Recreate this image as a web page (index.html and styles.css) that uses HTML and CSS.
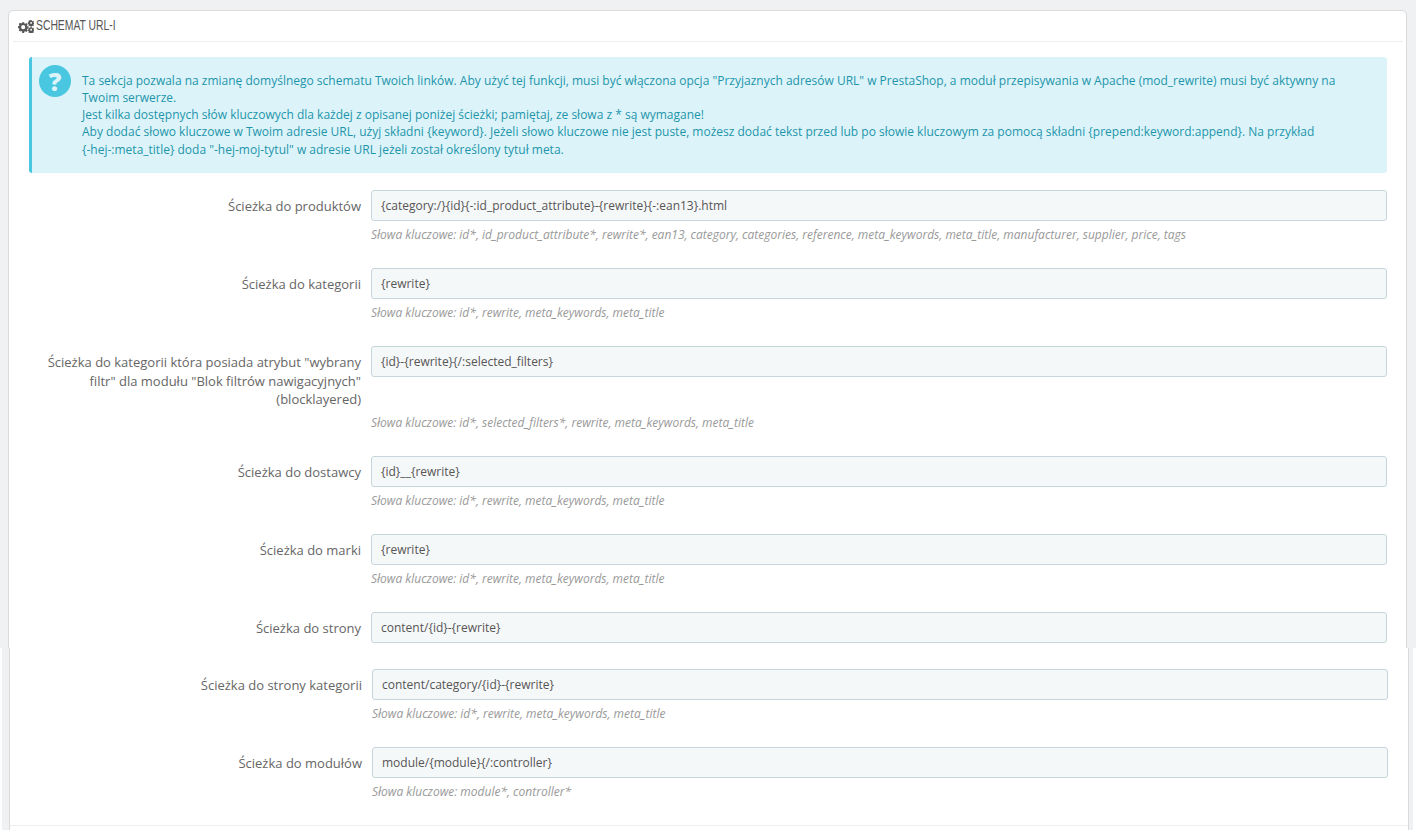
FILE: index.html
```html
<!DOCTYPE html>
<html>
	<head>
		<meta charset="UTF-8">
		<title>Schemat URL-i</title>
		<link rel="stylesheet" href="styles.css">
	</head>
	<body>
		<div class="upper">
			<div class="panel panel-top">
				<div class="heading">
					<svg class="cogs" viewBox="0 0 20 16" width="16" height="13">
						<g fill="#555">
							<path fill-rule="evenodd" d="M5.3 2.6h2.4l.3 1.6 1 .4 1.4-.9 1.7 1.7-.9 1.4.4 1 1.600.3v2.400l-1.600.3-.4 1 .9 1.400-1.700 1.700-1.400-.9-1 .4-.3 1.600H5.300L5 13.900l-1-.4-1.400.9L.9 12.700l.9-1.400-.4-1L-.2 10V7.600l1.600-.3.4-1-.9-1.400L2.600 3.200l1.400.9 1-.4zM6.500 6.200a2.600 2.600 0 1 0 0 5.200 2.600 2.600 0 0 0 0-5.200z"/>
							<path fill-rule="evenodd" d="M15.700 0h1.400l.2 1 .7.300.9-.5.900.9-.5.900.3.700 1 .2v1.400l-1 .2-.3.700.5.900-.9.900-.9-.5-.7.300-.2 1h-1.400l-.2-1-.7-.300-.9.5-.9-.9.5-.9-.3-.7-1-.2V2.800l1-.2.300-.7-.5-.9.900-.9.900.5.700-.3zM16.400 2.300a1.200 1.200 0 1 0 0 2.400 1.200 1.200 0 0 0 0-2.400z"/>
							<path fill-rule="evenodd" d="M15.700 8.600h1.400l.2 1 .7.300.9-.5.900.9-.5.900.3.700 1 .2v1.400l-1 .2-.3.700.5.900-.9.900-.9-.5-.7.300-.2.900h-1.400l-.2-.9-.7-.300-.9.5-.9-.9.5-.9-.3-.7-1-.2v-1.400l1-.2.300-.7-.5-.9.900-.9.900.5.700-.3zM16.400 10.900a1.200 1.200 0 1 0 0 2.400 1.200 1.200 0 0 0 0-2.400z"/>
						</g>
					</svg>
					<span class="heading-text">SCHEMAT URL-I</span>
				</div>
				<div class="alert">
					<span class="alert-icon">?</span>
					<p>Ta sekcja pozwala na zmianę domyślnego schematu Twoich linków. Aby użyć tej funkcji, musi być włączona opcja "Przyjaznych adresów URL" w PrestaShop, a moduł przepisywania w Apache (mod_rewrite) musi być aktywny na Twoim serwerze.<br>
					Jest kilka dostępnych słów kluczowych dla każdej z opisanej poniżej ścieżki; pamiętaj, ze słowa z * są wymagane!<br>
					Aby dodać słowo kluczowe w Twoim adresie URL, użyj składni {keyword}. Jeżeli słowo kluczowe nie jest puste, możesz dodać tekst przed lub po słowie kluczowym za pomocą składni {prepend:keyword:append}. Na przykład <span class="nowrap">{-hej-:meta_title}</span> doda "-hej-moj-tytul" w adresie URL jeżeli został określony tytuł meta.</p>
				</div>
				<div class="row">
					<label>Ścieżka do produktów</label>
					<div class="input">{category:/}{id}{-:id_product_attribute}-{rewrite}{-:ean13}.html</div>
					<p class="hint">Słowa kluczowe: id*, id_product_attribute*, rewrite*, ean13, category, categories, reference, meta_keywords, meta_title, manufacturer, supplier, price, tags</p>
				</div>
				<div class="row">
					<label>Ścieżka do kategorii</label>
					<div class="input">{rewrite}</div>
					<p class="hint">Słowa kluczowe: id*, rewrite, meta_keywords, meta_title</p>
				</div>
				<div class="row">
					<label>Ścieżka do kategorii która posiada atrybut "wybrany filtr" dla modułu "Blok filtrów nawigacyjnych" (blocklayered)</label>
					<div class="input">{id}-{rewrite}{/:selected_filters}</div>
					<p class="hint">Słowa kluczowe: id*, selected_filters*, rewrite, meta_keywords, meta_title</p>
				</div>
				<div class="row">
					<label>Ścieżka do dostawcy</label>
					<div class="input">{id}__{rewrite}</div>
					<p class="hint">Słowa kluczowe: id*, rewrite, meta_keywords, meta_title</p>
				</div>
				<div class="row">
					<label>Ścieżka do marki</label>
					<div class="input">{rewrite}</div>
					<p class="hint">Słowa kluczowe: id*, rewrite, meta_keywords, meta_title</p>
				</div>
				<div class="row">
					<label>Ścieżka do strony</label>
					<div class="input">content/{id}-{rewrite}</div>
				</div>
			</div>
		</div>
		<div class="lower">
			<div class="panel panel-bottom">
				<div class="row">
					<label>Ścieżka do strony kategorii</label>
					<div class="input">content/category/{id}-{rewrite}</div>
					<p class="hint">Słowa kluczowe: id*, rewrite, meta_keywords, meta_title</p>
				</div>
				<div class="row">
					<label>Ścieżka do modułów</label>
					<div class="input">module/{module}{/:controller}</div>
					<p class="hint">Słowa kluczowe: module*, controller*</p>
				</div>
				<div class="footer-line"></div>
			</div>
		</div>
	</body>
</html>
```
FILE: styles.css
```css
*{
	margin: 0;
	padding: 0;
	box-sizing: border-box;
}

html,body{
	height: 100%;
	overflow: hidden;
}

body{
	background-color: #fff;
	font-family: "Open Sans", "Liberation Sans", sans-serif;
	font-size: 12px;
	line-height: 1.42857;
	color: #555;
}

.upper{
	height: 648px;
	padding: 10px 9px 0 8px;
	background-color: #eff1f2;
	overflow: hidden;
}

.lower{
	height: 182px;
	margin: 0 3px 0 2px;
	padding: 0 4px 0 7px;
	background-color: #eff1f2;
}

.panel{
	background-color: #fff;
	border: 1px solid #d9dadc;
}

.panel-top{
	height: 700px;
	padding: 0 3px 0 4px;
	border-radius: 5px 5px 0 0;
}

.panel-bottom{
	height: 100%;
	padding-top: 21px;
	border-width: 0 1px;
}

.heading{
	display: flex;
	align-items: center;
	gap: 2px;
	height: 31px;
	padding-left: 5px;
	border-bottom: 1px solid #eee;
}

.heading-text{
	font-family: "Liberation Sans", sans-serif;
	font-size: 14px;
	color: #555;
	transform: scaleX(.74);
	transform-origin: left center;
}

.alert{
	display: flex;
	gap: 11px;
	height: 116px;
	margin: 15px 16px 17px;
	padding: 15px 15px 0 7px;
	background-color: #dcf4f9;
	border-left: 3px solid #4ac7e0;
	border-radius: 3px;
	color: #1e94ab;
}

.alert p{
	flex: 1;
}

.nowrap{
	white-space: nowrap;
}

.alert-icon{
	flex: none;
	width: 32px;
	height: 32px;
	margin-top: -7px;
	border-radius: 50%;
	background-color: #4ac7e0;
	color: #dcf4f9;
	font-size: 25px;
	font-weight: 800;
	line-height: 32px;
	text-align: center;
}

.row{
	display: grid;
	grid-template-columns: 332px 1fr;
	column-gap: 10px;
	margin: 0 16px 25px;
}

.panel-bottom .row{
	margin: 0 20px 25px;
}

.row label{
	padding-top: 7px;
	text-align: right;
	font-size: 13px;
	color: #666;
}

.input{
	height: 31px;
	padding: 6px 9px;
	background-color: #f5f8f9;
	border: 1px solid #c7d6db;
	border-radius: 3px;
	color: #555;
}

.hint{
	grid-column: 2;
	margin-top: 5px;
	font-style: italic;
	line-height: 17px;
	color: #999;
}

.footer-line{
	margin-top: 1px;
	border-top: 1px solid #eee;
}
```
